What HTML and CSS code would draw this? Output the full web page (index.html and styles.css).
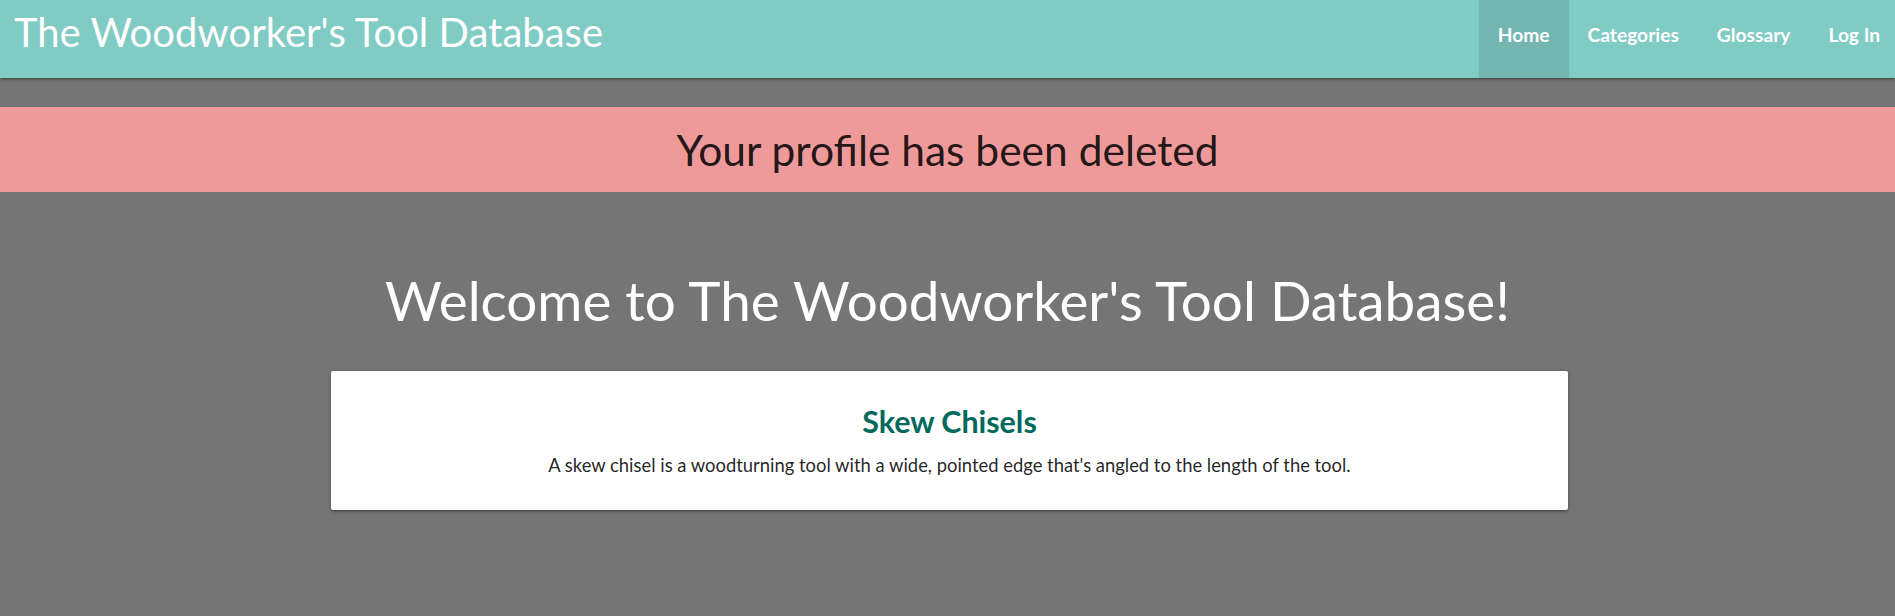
FILE: index.html
```html
<!DOCTYPE html>
<html lang="en">
<head>
<meta charset="utf-8">
<title>The Woodworker's Tool Database</title>
<link rel="stylesheet" href="styles.css">
</head>
<body>
<header class="navbar">
  <a class="brand" href="#">The Woodworker's Tool Database</a>
  <nav class="nav-links">
    <a class="nav-link active" href="#">Home</a>
    <a class="nav-link" href="#">Categories</a>
    <a class="nav-link" href="#">Glossary</a>
    <a class="nav-link" href="#">Log In</a>
  </nav>
</header>
<main>
  <h4 class="flash">Your profile has been deleted</h4>
  <h3 class="welcome">Welcome to The Woodworker's Tool Database!</h3>
  <div class="card">
    <h5 class="card-title">Skew Chisels</h5>
    <p class="card-text">A skew chisel is a woodturning tool with a wide, pointed edge that's angled to the length of the tool.</p>
  </div>
</main>
</body>
</html>
```

FILE: styles.css
```css
html, body {
  margin: 0;
  padding: 0;
}
body {
  background: #757575;
  font-family: Lato, "Open Sans", sans-serif;
  color: rgba(0, 0, 0, 0.87);
  min-height: 616px;
}
a {
  text-decoration: none;
  color: #fff;
}
.navbar {
  display: flex;
  justify-content: space-between;
  align-items: flex-start;
  height: 78px;
  background: #80cbc4;
  box-shadow: 0 2px 2px 0 rgba(0,0,0,.14), 0 3px 1px -2px rgba(0,0,0,.12), 0 1px 5px 0 rgba(0,0,0,.2);
  position: relative;
  z-index: 2;
}
.brand {
  font-family: Lato, sans-serif;
  font-size: 40px;
  line-height: 48px;
  padding: 8px 0 0 14px;
}
.nav-links {
  display: flex;
  height: 78px;
}
.nav-link {
  display: block;
  height: 78px;
  line-height: 70px;
  padding: 0 19px;
  font-size: 19.2px;
  font-weight: 700;
}
.nav-link:last-child {
  padding-right: 15px;
}
.nav-link.active {
  background: rgba(0, 0, 0, 0.1);
}
.flash {
  margin: 29px 0 0;
  height: 85px;
  line-height: 85px;
  background: #ef9a9a;
  text-align: center;
  font-size: 42.5px;
  font-weight: 400;
}
.welcome {
  margin: 78px 0 0;
  line-height: 61px;
  color: #fff;
  text-align: center;
  font-size: 54.8px;
  font-weight: 400;
}
.card {
  width: 1237px;
  margin: 40px 0 0 331px;
  box-sizing: border-box;
  background: #fff;
  border-radius: 2px;
  padding: 31px 24px 30px;
  text-align: center;
  box-shadow: 0 2px 2px 0 rgba(0,0,0,.14), 0 3px 1px -2px rgba(0,0,0,.12), 0 1px 5px 0 rgba(0,0,0,.2);
}
.card-title {
  margin: 0;
  font-size: 30.4px;
  line-height: 38px;
  font-weight: 700;
  color: #00695c;
}
.card-text {
  margin: 11px 0 0;
  font-size: 18.4px;
  line-height: 28.8px;
}
```
